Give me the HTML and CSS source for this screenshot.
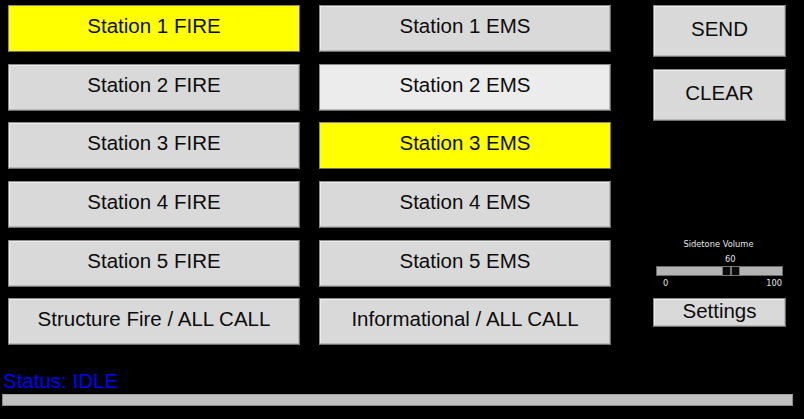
FILE: index.html
```html
<!DOCTYPE html>
<html>
<head>
<meta charset="utf-8">
<link rel="stylesheet" href="styles.css">
</head>
<body>
<div class="app">
  <div class="main">
    <div class="grid">
      <div class="btn active">Station 1 FIRE</div>
      <div class="btn">Station 1 EMS</div>
      <div class="btn">Station 2 FIRE</div>
      <div class="btn hover">Station 2 EMS</div>
      <div class="btn">Station 3 FIRE</div>
      <div class="btn active">Station 3 EMS</div>
      <div class="btn">Station 4 FIRE</div>
      <div class="btn">Station 4 EMS</div>
      <div class="btn">Station 5 FIRE</div>
      <div class="btn">Station 5 EMS</div>
      <div class="btn">Structure Fire / ALL CALL</div>
      <div class="btn">Informational / ALL CALL</div>
    </div>
    <div class="side">
      <div class="btn big">SEND</div>
      <div class="btn big clear">CLEAR</div>
      <div class="volume">
        <div class="vol-title">Sidetone Volume</div>
        <div class="vol-value">60</div>
        <div class="track"><div class="handle"><span></span><span></span></div></div>
        <div class="vol-scale"><span>0</span><span>100</span></div>
      </div>
      <div class="btn small">Settings</div>
    </div>
  </div>
  <div class="status">Status: IDLE</div>
  <div class="progress"></div>
</div>
</body>
</html>
```
FILE: styles.css
```css
html, body {
  margin: 0;
  padding: 0;
  background: #000;
}
.app {
  width: 804px;
  height: 419px;
  font-family: "Liberation Sans", Arial, sans-serif;
}
.main {
  display: flex;
  padding: 5px 0 0 8px;
}
.grid {
  display: grid;
  grid-template-columns: 292px 292px;
  grid-template-rows: repeat(6, 47px);
  column-gap: 19px;
  row-gap: 11.7px;
}
.btn {
  box-sizing: border-box;
  display: flex;
  align-items: center;
  justify-content: center;
  padding-bottom: 6px;
  background: #d9d9d9;
  border: 1px solid #8a8a8a;
  border-right-color: #6e6e6e;
  border-bottom-color: #6e6e6e;
  box-shadow: inset -1px -1px 0 #b8b8b8, inset 1px 1px 0 #ececec;
  color: #0c0c0c;
  font-size: 20.5px;
  line-height: 23px;
  white-space: nowrap;
}
.btn.active {
  background: #ffff00;
  box-shadow: none;
}
.btn.hover {
  background: #ececec;
}
.side {
  margin-left: 42px;
  width: 133px;
  display: flex;
  flex-direction: column;
}
.btn.big {
  height: 52px;
  padding-bottom: 6px;
}
.btn.clear {
  margin-top: 12px;
}
.volume {
  margin-top: 118px;
  font-family: "DejaVu Sans", sans-serif;
  font-size: 8.3px;
  line-height: 10px;
  color: #e6e6e6;
}
.vol-title {
  text-align: center;
  padding-right: 2px;
}
.vol-value {
  margin-top: 5px;
  padding-left: 72px;
}
.track {
  position: relative;
  margin: 2px 3px 0 3px;
  height: 10px;
  box-sizing: border-box;
  background: #b4b4b4;
  border: 1px solid #6a6a6a;
}
.handle {
  position: absolute;
  left: 65px;
  top: -1px;
  width: 18px;
  height: 10px;
  display: flex;
}
.handle span {
  flex: 1;
  box-sizing: border-box;
  background: #0a0a0a;
  border: 1px solid #777;
}
.vol-scale {
  display: flex;
  justify-content: space-between;
  margin-top: 2px;
  padding: 0 4px 0 10px;
}
.btn.small {
  margin-top: 10px;
  height: 29px;
  padding-bottom: 5px;
}
.status {
  margin-top: 24px;
  padding-left: 3px;
  color: #0000ff;
  font-size: 20.5px;
  line-height: 23px;
}
.progress {
  margin: 2px 0 0 2px;
  width: 791px;
  height: 12px;
  box-sizing: border-box;
  background: #c0c0c0;
  border: 1px solid #8c8c8c;
  border-top-color: #a0a0a0;
}
```
